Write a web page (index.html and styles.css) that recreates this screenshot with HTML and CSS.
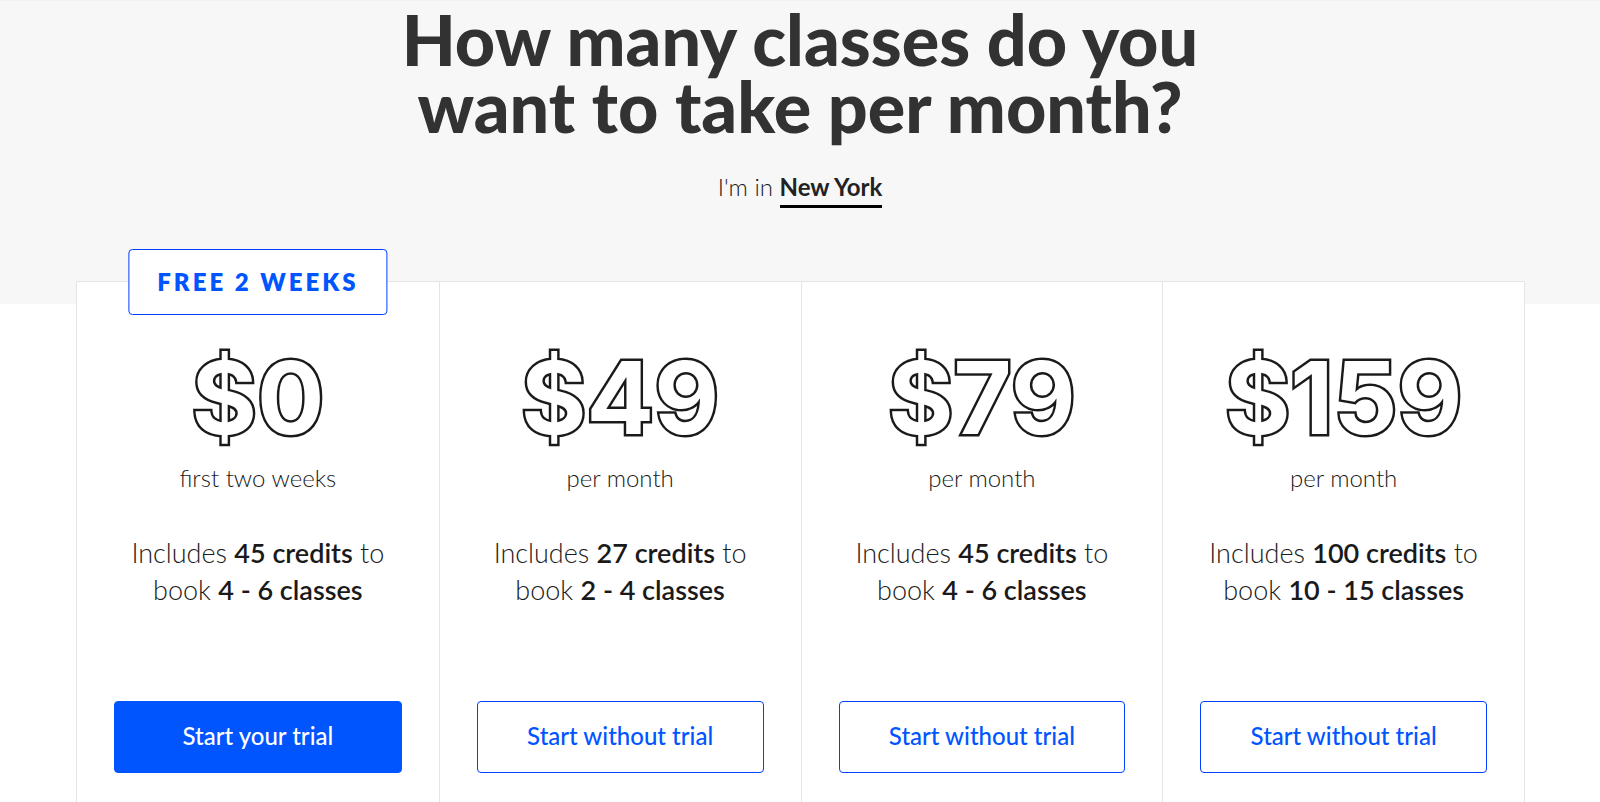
FILE: index.html
```html
<!DOCTYPE html>
<html lang="en">
<head>
    <meta charset="UTF-8">
    <meta name="viewport" content="width=device-width, initial-scale=1.0">
    <title>Plans</title>
    <link rel="stylesheet" href="styles.css">
</head>
<body>

    <header class="hero">
        <h1>How many classes do you<br>want to take per month?</h1>
        <p class="location">I'm in <a href="#">New York</a></p>
    </header>

    <main class="plans">
        <section class="plan">
            <span class="badge">FREE 2 WEEKS</span>
            <h2 class="price">$0</h2>
            <p class="period">first two weeks</p>
            <p class="details">Includes <strong>45 credits</strong> to<br>book <strong>4 - 6 classes</strong></p>
            <button class="btn btn-primary" type="button">Start your trial</button>
        </section>

        <section class="plan">
            <h2 class="price">$49</h2>
            <p class="period">per month</p>
            <p class="details">Includes <strong>27 credits</strong> to<br>book <strong>2 - 4 classes</strong></p>
            <button class="btn" type="button">Start without trial</button>
        </section>

        <section class="plan">
            <h2 class="price">$79</h2>
            <p class="period">per month</p>
            <p class="details">Includes <strong>45 credits</strong> to<br>book <strong>4 - 6 classes</strong></p>
            <button class="btn" type="button">Start without trial</button>
        </section>

        <section class="plan">
            <h2 class="price">$159</h2>
            <p class="period">per month</p>
            <p class="details">Includes <strong>100 credits</strong> to<br>book <strong>10 - 15 classes</strong></p>
            <button class="btn" type="button">Start without trial</button>
        </section>
    </main>

</body>
</html>
```

FILE: styles.css
```css
* {
    box-sizing: border-box;
    margin: 0;
    padding: 0;
}

body {
    font-family: 'Lato', sans-serif;
    font-weight: 300;
    background-color: #fff;
    color: #1a1a1a;
    text-align: center;
}

.hero {
    background-color: #f7f7f7;
    border-top: 1px solid #f2f2f2;
    padding: 5px 20px 96px;
}

.hero h1 {
    font-size: 70px;
    font-weight: 900;
    line-height: 67px;
    color: #323232;
}

.location {
    margin-top: 29px;
    font-size: 24px;
    line-height: 36px;
}

.location a {
    display: inline-block;
    font-weight: 700;
    color: #222;
    text-decoration: none;
    border-bottom: 3px solid #000;
}

.plans {
    display: grid;
    grid-template-columns: repeat(4, 1fr);
    margin: -23px 75px 0 76px;
    background-color: #fff;
    border: 1px solid #e5e5e5;
    border-bottom: none;
}

.plan {
    position: relative;
    display: flex;
    flex-direction: column;
    padding: 54px 37px 60px;
}

.plan + .plan {
    border-left: 1px solid #e5e5e5;
}

/* sits over the top edge of the plans box */
.badge {
    position: absolute;
    top: 0;
    left: 50%;
    transform: translate(-50%, -50%);
    padding: 0 28px;
    font-size: 24px;
    font-weight: 800;
    line-height: 64px;
    letter-spacing: 3px;
    white-space: nowrap;
    color: #0055ff;
    background-color: #fff;
    border: 1px solid #0040ff;
    border-radius: 4px;
}

/* fill is painted over the inner half of the stroke */
.price {
    font-family: 'Inter', sans-serif;
    font-size: 100px;
    font-weight: 700;
    line-height: 124px;
    color: #fff;
    -webkit-text-stroke: 5px #1a1a1a;
    paint-order: stroke fill;
}

.period {
    font-size: 24px;
    line-height: 36px;
}

.details {
    margin-top: 38px;
    font-size: 27px;
    line-height: 37px;
}

.details strong {
    font-weight: 600;
}

.btn {
    margin-top: 93px;
    height: 72px;
    padding-bottom: 3px;
    font-family: inherit;
    font-size: 24px;
    font-weight: 500;
    color: #0055ff;
    background-color: #fff;
    border: 1px solid #0040ff;
    border-radius: 4px;
    cursor: pointer;
}

.btn-primary {
    color: #fff;
    background-color: #0055ff;
    border-color: #0055ff;
}
```
